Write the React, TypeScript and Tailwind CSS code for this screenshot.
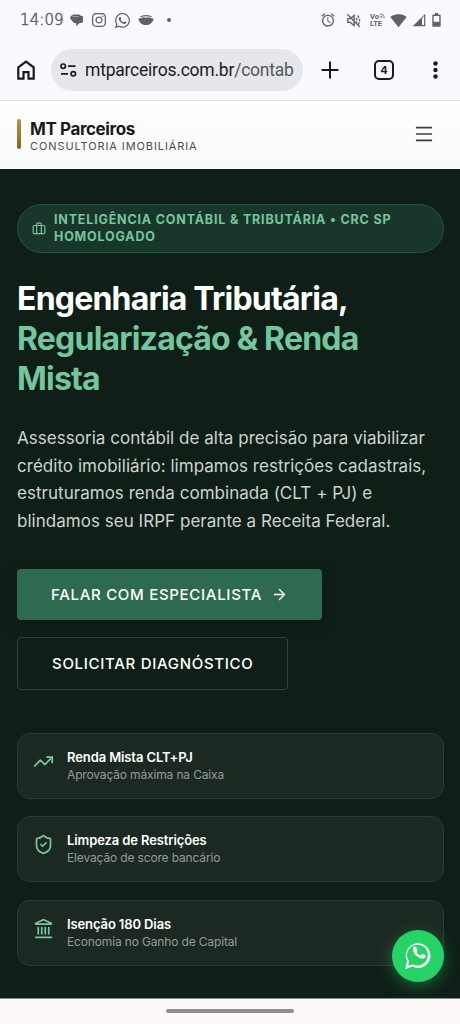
import type { ReactNode } from "react";
import {
  ArrowRight,
  Briefcase,
  Landmark,
  Menu,
  ShieldCheck,
  TrendingUp,
} from "lucide-react";
import { FaInstagram, FaWhatsapp } from "react-icons/fa";
import { MdAlarm, MdSignalWifi4Bar } from "react-icons/md";

function StatusBar() {
  return (
    <div className="flex h-10 items-center justify-between pl-[20px] pr-[19px] text-[#616165]">
      <div className="flex items-center">
        <span className="w-[50px] font-['DejaVu_Sans',sans-serif] text-[15px] font-extralight tracking-[0.100px] whitespace-nowrap [-webkit-text-stroke:0.5px_#616165]">
          14:09
        </span>
        <svg width="13" height="13" viewBox="0 0 13 13" fill="currentColor">
          <path d="M3.500.500H8.500a2.500 2.500 0 0 1 2.300 1.200A3.600 3.600 0 0 1 9.500 9L6.300 12.500V9.200H5A4 4 0 0 1 2 6.800L0 4.200.800 2Z" />
          <path d="M2.300 2.600H9" stroke="#faf9ff" strokeWidth=".4" />
        </svg>
        <FaInstagram className="ml-[8px]" size={16} />
        <FaWhatsapp className="ml-[7px]" size={17} />
        <svg className="ml-[7px]" width="16" height="12" viewBox="0 0 16 12" fill="currentColor">
          <path d="M1.500 3.200C4 .200 12 .200 14.500 3.200L13 3Q8 1.700 3 3Z" />
          <path d="M.3 4.700 3 4q3-1.200 5-.2 2-1 5 .2l2.700.7C14.500 8.700 12 11 8 11S1.500 8.700.300 4.700Z" />
        </svg>
        <span className="ml-[13px] size-1 rounded-full bg-current" />
      </div>
      <div className="flex items-center">
        <MdAlarm size={16} />
        <svg className="ml-[10px]" width="15" height="15" viewBox="0 0 24 24" fill="none" stroke="currentColor" strokeWidth="2.2">
          <path d="M2 2l20 20M3 9h4l6-5v16l-6-5H3Z" />
          <path d="M16 8q3 4 0 8M18.500 4q6 7 1 15" strokeDasharray="4 2" />
        </svg>
        <div className="ml-[9px] flex w-[15px] flex-col font-['Roboto',sans-serif] text-[7.500px] leading-[7.500px] font-bold">
          <span className="flex">
            Vo
            <svg className="shrink-0" width="6" height="6" viewBox="0 0 7 7" fill="none" stroke="currentColor">
              <path d="M1 1q5 0 5 5M1 3.500q2.500 0 2.500 2.500" />
            </svg>
          </span>
          <span>LTE</span>
        </div>
        <MdSignalWifi4Bar className="ml-[5px]" size={17} />
        <svg className="ml-[5px]" width="14" height="14" viewBox="0 0 14 14">
          <path d="M13.300.700v12.600H.700Z" fill="currentColor" />
          <path d="M10 5.200 12.100 3v9.100H10Z" fill="#faf9ff" />
        </svg>
        <svg className="ml-[6px]" width="9" height="14" viewBox="0 0 9 14">
          <path d="M3 0h3v1.400H3ZM1.300 1.400h6.400q1 0 1 1v10.300q0 1-1 1H1.300q-1 0-1-1V2.400q0-1 1-1Z" fill="currentColor" />
          <path d="M1.700 3h5.600v5.800H1.700Z" fill="#faf9ff" />
        </svg>
      </div>
    </div>
  );
}

function AddressBar() {
  return (
    <div className="flex h-[61px] items-center border-b border-[#e0dfe8] pl-[17px] text-[#1b1b1f]">
      <svg className="shrink-0" width="18" height="20" viewBox="0 0 18 20" fill="none" stroke="currentColor" strokeWidth="2.200">
        <path d="M1.300 7.400 9 1.700l7.700 5.700v11.200h-5.200v-6.400h-5v6.400H1.300Z" />
      </svg>
      <div className="ml-[16px] flex h-[42px] w-[252px] shrink-0 items-center rounded-full bg-[#e6e7ec] pl-[9px]">
        <svg className="shrink-0" width="17" height="14" viewBox="0 0 17 14" fill="none" stroke="currentColor" strokeWidth="1.700">
          <circle cx="3.200" cy="3.200" r="2.200" />
          <path d="M8 3.200H15.500M1 10.800h7" />
          <circle cx="13.300" cy="10.800" r="2.200" />
        </svg>
        <span className="ml-[8px] font-['Roboto',sans-serif] text-[17.500px] tracking-[-0.22px] whitespace-nowrap">
          mtparceiros.com.br<span className="text-[#55565b]">/contab</span>
        </span>
      </div>
      <svg className="ml-[18px] shrink-0" width="18" height="18" viewBox="0 0 18 18" stroke="currentColor" strokeWidth="2">
        <path d="M9 .5v17M.5 9h17" />
      </svg>
      <span className="ml-[35px] flex size-[20px] shrink-0 items-center justify-center rounded-[5px] border-2 border-current font-['Inter',sans-serif] text-[11px] font-bold">
        4
      </span>
      <svg className="ml-[38.500px] shrink-0" width="5" height="18" viewBox="0 0 5 18" fill="currentColor">
        <circle cx="2.500" cy="2.500" r="2.200" />
        <circle cx="2.500" cy="9" r="2.200" />
        <circle cx="2.500" cy="15.500" r="2.200" />
      </svg>
    </div>
  );
}

function SiteHeader() {
  return (
    <header className="flex h-[68px] items-start justify-between bg-linear-to-b from-white to-[#f8f9fa] pt-[18px] pl-[17px] pr-[25px]">
      <div className="flex items-start gap-[9px]">
        <span className="h-[30px] w-1 rounded-[2px] bg-linear-to-b from-[#b8944d] to-[#86651f]" />
        <div className="whitespace-nowrap">
          <p className="text-[17px] leading-[20px] font-bold tracking-[-0.400px] text-[#1a1a1a]">
            MT Parceiros
          </p>
          <p className="text-[11px] leading-[15px] tracking-[0.9px] text-[#4b4f4e]">
            CONSULTORIA IMOBILIÁRIA
          </p>
        </div>
      </div>
      <Menu size={22} strokeWidth={1.900} className="mt-[4px] text-[#3c3c3c]" />
    </header>
  );
}

function Feature({ icon, title, text }: { icon: ReactNode; title: string; text: string }) {
  return (
    <li className="flex h-[66px] items-start rounded-[13px] border border-[#2b3932] bg-[#1c2923] pl-[15px] pt-[14px]">
      <span className="mt-[3px] w-[34px] text-[#74c69d]">{icon}</span>
      <div className="whitespace-nowrap">
        <p className="text-[13px] leading-[18px] font-semibold tracking-[-0.11px] text-white">{title}</p>
        <p className="text-[12px] leading-[18px] tracking-[-0.15px] text-[#939b97]">{text}</p>
      </div>
    </li>
  );
}

function Hero() {
  return (
    <main className="h-[829px] bg-[#0f1f18] px-[17px] pt-[35px]">
      <div className="flex h-[49px] w-[427px] items-center rounded-full border border-[#285240] bg-[#18362a] pl-[14px] text-[#74c69d]">
        <Briefcase size={14} className="shrink-0" />
        <p className="ml-[8px] -mt-px text-[12.500px] leading-[17px] font-bold tracking-[0.820px] whitespace-nowrap">
          INTELIGÊNCIA CONTÁBIL &amp; TRIBUTÁRIA • CRC SP
          <br />
          HOMOLOGADO
        </p>
      </div>

      <h1 className="mt-[26px] text-[32px] leading-[40px] font-bold tracking-[-0.8px] whitespace-nowrap text-white">
        Engenharia Tributária,
        <br />
        <span className="text-[#74c69d]">
          Regularização &amp; Renda
          <br />
          Mista
        </span>
      </h1>

      <p className="mt-[26px] text-[17px] leading-[27.700px] tracking-[0.030px] whitespace-nowrap text-[#cfd2d1]">
        Assessoria contábil de alta precisão para viabilizar
        <br />
        crédito imobiliário: limpamos restrições cadastrais,
        <br />
        estruturamos renda combinada (CLT + PJ) e
        <br />
        blindamos seu IRPF perante a Receita Federal.
      </p>

      <div className="mt-[33px] flex flex-col items-start gap-[17px] text-[15px] font-medium tracking-[0.7px] whitespace-nowrap text-white">
        <a className="flex h-[51px] w-[305px] items-center rounded-[4px] bg-[#2d6a4f] pl-[34px] pt-px shadow-[0_4px_14px_rgba(0,0,0,0.2)]">
          FALAR COM ESPECIALISTA
          <ArrowRight size={17} className="ml-[9px]" />
        </a>
        <a className="flex h-[53px] w-[271px] items-center rounded-[4px] border border-[#33423a] pl-[34px] pt-px">
          SOLICITAR DIAGNÓSTICO
        </a>
      </div>

      <ul className="mt-[43px] flex w-[427px] flex-col gap-[17.500px]">
        <Feature icon={<TrendingUp size={21} />} title="Renda Mista CLT+PJ" text="Aprovação máxima na Caixa" />
        <Feature icon={<ShieldCheck size={21} />} title="Limpeza de Restrições" text="Elevação de score bancário" />
        <Feature icon={<Landmark size={21} />} title="Isenção 180 Dias" text="Economia no Ganho de Capital" />
      </ul>
    </main>
  );
}

export default function App() {
  return (
    <div className="relative h-[1024px] w-[460px] overflow-hidden bg-[#faf9ff] font-['Inter',sans-serif]">
      <StatusBar />
      <AddressBar />
      <SiteHeader />
      <Hero />
      <div className="flex h-[26px] justify-center border-t border-[#8a8f8c] bg-[#fdf9f8] pt-[10px]">
        <span className="h-1 w-[128px] rounded-full bg-[#918e8e]" />
      </div>

      {/* botão flutuante */}
      <a
        aria-label="WhatsApp"
        className="absolute top-[930px] left-[392px] flex size-[52px] items-center justify-center rounded-full bg-[#25d366] text-white shadow-[0_4px_16px_rgba(37,211,102,0.4)]"
      >
        <svg width="26" height="27" viewBox="0 0 26 27" fill="none">
          <path d="M.300 26.300 1.900 18A12.400 12.400 0 1 1 7.300 23.600Z" fill="currentColor" />
          <path d="M3.200 22.600 4 18.200A10.400 10.400 0 1 1 7.800 21.400Z" fill="#25d366" />
          <path d="M8.100 4.600q1-1.700 3-.7l1.400 3.100q.1 1.200-1 2.100 1.200 2.500 3.700 3.400l1.900-1.500 3.400 1.100q.6 2.700-1.700 3.300-4.300.6-7.900-3Q7.500 8.600 8.100 4.600Z" fill="currentColor" />
        </svg>
      </a>
    </div>
  );
}
